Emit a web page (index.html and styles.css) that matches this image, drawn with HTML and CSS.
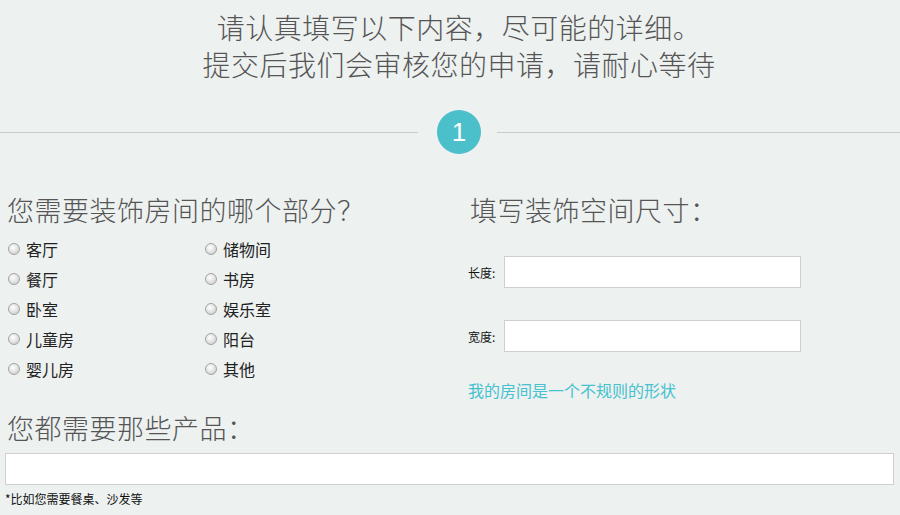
FILE: index.html
```html
<!DOCTYPE html>
<html lang="zh">
<head>
<meta charset="utf-8">
<title>装饰需求</title>
<link rel="stylesheet" href="styles.css">
</head>
<body>
<div class="intro">
  <p>请认真填写以下内容，尽可能的详细。</p>
  <p>提交后我们会审核您的申请，请耐心等待</p>
</div>
<div class="step">
  <span class="line line-left"></span>
  <span class="circle">1</span>
  <span class="line line-right"></span>
</div>
<div class="columns">
  <div class="col-left">
    <h2 class="title">您需要装饰房间的哪个部分？</h2>
    <div class="rooms">
      <label class="room"><span class="radio"></span>客厅</label>
      <label class="room"><span class="radio"></span>储物间</label>
      <label class="room"><span class="radio"></span>餐厅</label>
      <label class="room"><span class="radio"></span>书房</label>
      <label class="room"><span class="radio"></span>卧室</label>
      <label class="room"><span class="radio"></span>娱乐室</label>
      <label class="room"><span class="radio"></span>儿童房</label>
      <label class="room"><span class="radio"></span>阳台</label>
      <label class="room"><span class="radio"></span>婴儿房</label>
      <label class="room"><span class="radio"></span>其他</label>
    </div>
  </div>
  <div class="col-right">
    <h2 class="title title-right">填写装饰空间尺寸：</h2>
    <div class="field"><span class="field-label">长度:</span><span class="box"></span></div>
    <div class="field field-second"><span class="field-label">宽度:</span><span class="box"></span></div>
    <a class="irregular">我的房间是一个不规则的形状</a>
  </div>
</div>
<div class="products">
  <h2 class="title title-products">您都需要那些产品：</h2>
  <div class="box box-wide"></div>
  <p class="note">*比如您需要餐桌、沙发等</p>
</div>
</body>
</html>
```
FILE: styles.css
```css
* { box-sizing: border-box; }
body {
  margin: 0;
  background: #edf1f0;
  font-family: "Noto Sans CJK SC", "Noto Sans", sans-serif;
  color: #222;
  width: 900px;
  height: 515px;
  overflow: hidden;
}
.intro {
  padding-top: 9px;
  text-align: center;
  color: #555;
  font-size: 28px;
  letter-spacing: 0.5px;
  line-height: 37px;
  font-weight: 300;
}
.intro p { margin: 0; padding-left: 18px; }
.step {
  display: flex;
  align-items: center;
  margin-top: 27px;
  height: 44px;
}
.line { height: 1px; background: #c8cccb; }
.line-left { width: 418px; margin-right: 19px; }
.line-right { flex: 1; margin-left: 16px; }
.circle {
  width: 44px;
  height: 44px;
  border-radius: 50%;
  background: #4bbfca;
  color: #fff;
  font-family: "Liberation Sans", Arial, sans-serif;
  font-size: 26px;
  line-height: 44px;
  text-align: center;
}
.columns {
  display: flex;
  margin-top: 38px;
  height: 218px;
}
.col-left { width: 468px; padding-left: 7px; }
.col-right { flex: 1; }
.title {
  margin: 0;
  font-size: 27px;
  letter-spacing: 0.5px;
  line-height: 36px;
  font-weight: 300;
  color: #555;
  white-space: nowrap;
}
.title-right { padding-left: 2px; }
.rooms {
  display: grid;
  grid-template-columns: 197px 197px;
  margin-top: 6px;
}
.room {
  display: flex;
  align-items: center;
  height: 30px;
  font-size: 16px;
  color: #222;
  padding-left: 1px;
}
.radio {
  width: 12px;
  height: 12px;
  border-radius: 50%;
  border: 1px solid #a3a3a3;
  background: radial-gradient(circle at 40% 35%, #ffffff 0%, #e6e6e6 45%, #c4c4c4 100%);
  margin-right: 6px;
}
.field {
  display: flex;
  align-items: center;
  margin-top: 28px;
}
.field-second { margin-top: 32px; }
.field-label {
  width: 36px;
  font-size: 12px;
  color: #111;
}
.box {
  display: block;
  width: 297px;
  height: 32px;
  background: #fff;
  border: 1px solid #cfcfcf;
}
.irregular {
  display: block;
  margin-top: 28px;
  font-size: 16px;
  line-height: 20px;
  color: #45c1cf;
  cursor: pointer;
}
.products { padding-left: 5px; padding-right: 6px; }
.title-products { padding-left: 2px; }
.box-wide { width: 889px; margin-top: 7px; }
.note {
  margin: 6px 0 0;
  font-size: 12px;
  line-height: 16px;
  color: #111;
}
```
